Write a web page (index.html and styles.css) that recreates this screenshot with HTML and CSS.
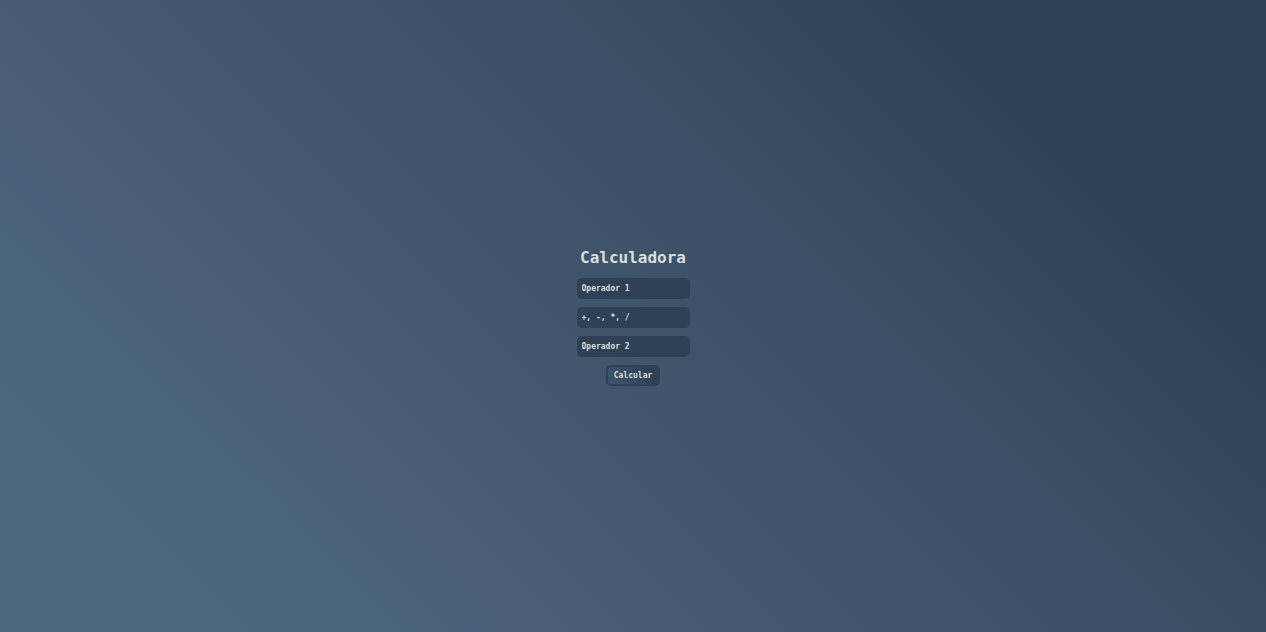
FILE: index.html
```
<!DOCTYPE html>
<html lang="es">
<head>
  <meta charset="utf-8">
  <meta name="viewport" content="width=device-width, initial-scale=1">
  <title>Calculadora</title>
  <link rel="stylesheet" href="styles.css">
</head>
<body class="page">
  <main class="calculator">
    <h1 class="title">Calculadora</h1>
    <form class="form">
      <input class="field" type="text" placeholder="Operador 1" aria-label="Operador 1">
      <input class="field" type="text" placeholder="+, -, *, /" aria-label="Operación">
      <input class="field" type="text" placeholder="Operador 2" aria-label="Operador 2">
      <button class="submit" type="button">Calcular</button>
    </form>
  </main>
</body>
</html>
```
FILE: styles.css
```
* {
  box-sizing: border-box;
}

.page {
  margin: 0;
  min-height: 100vh;
  display: flex;
  align-items: center;
  justify-content: center;
  background: linear-gradient(45deg, #4e697e 10%, #4a657a 20%, #485f76 27%, #3e546b 52%, #364c61 68%, #2f4157 82%);
  color: #dadfdc;
  font-family: "DejaVu Sans Mono", monospace;
}

.calculator,
.form {
  display: flex;
  flex-direction: column;
  align-items: center;
}

.calculator {
  gap: 9px;
}

.form {
  gap: 8px;
}

.title {
  margin: 0;
  padding-top: 1px;
  font-size: 16px;
  line-height: 22px;
  font-weight: bold;
}

.field,
.submit {
  height: 21px;
  border: 0;
  border-radius: 5px;
  background: #2f4157;
  color: #dadfdc;
  font-family: inherit;
  font-size: 8px;
  font-weight: bold;
}

.field {
  width: 113px;
  padding: 0 5px;
}

.field::placeholder {
  color: #dadfdc;
  opacity: 1;
}

.submit {
  padding: 0 6px;
  border: 2px solid #2f4157;
  background: linear-gradient(60deg, #40566e, #2f4157 85%) padding-box, #2f4157;
}
```
